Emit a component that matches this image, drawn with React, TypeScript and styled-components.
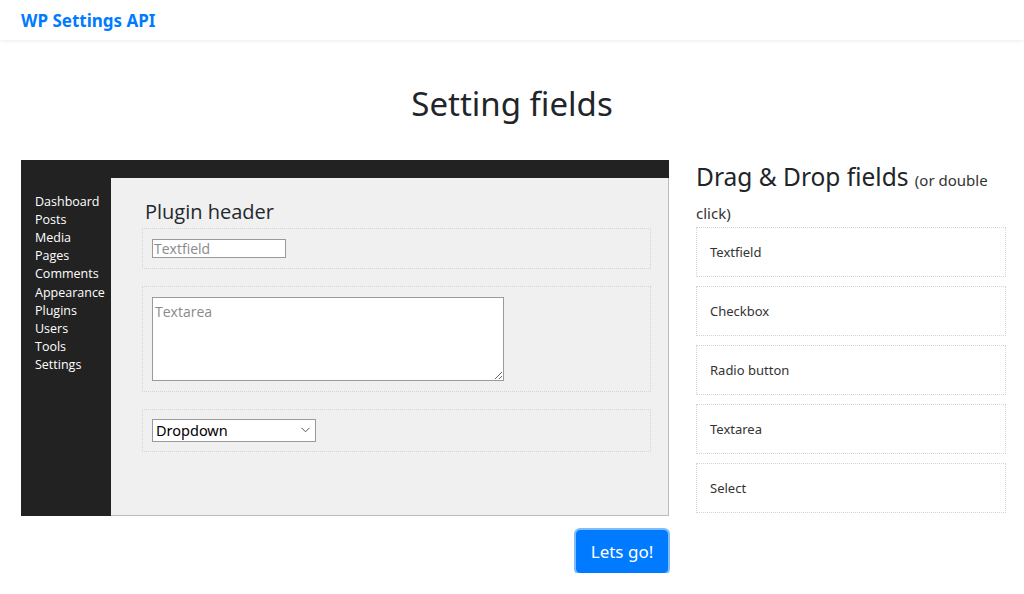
import React from "react";
import styled, { createGlobalStyle } from "styled-components";

const GlobalStyle = createGlobalStyle`
  * {
    box-sizing: border-box;
  }
  body {
    margin: 0;
    background: #fff;
    font-family: "Noto Sans", "Liberation Sans", sans-serif;
    color: #212529;
  }
`;

const Navbar = styled.nav`
  height: 40px;
  display: flex;
  align-items: center;
  padding: 0 21px;
  background: #fff;
  box-shadow: 0 1px 4px rgba(0, 0, 0, 0.08);
`;

const Brand = styled.a`
  font-size: 17px;
  font-weight: 700;
  color: #007bff;
  text-decoration: none;
`;

const Title = styled.h1`
  margin: 44px 0 36px;
  text-align: center;
  font-size: 33px;
  font-weight: 400;
  line-height: 39.6px;
  color: #212529;
`;

const Row = styled.div`
  display: flex;
  align-items: flex-start;
  gap: 27px;
  padding: 0 18px 0 21px;
`;

const LeftCol = styled.div`
  width: 648px;
  display: flex;
  flex-direction: column;
  align-items: flex-end;
`;

const AdminFrame = styled.div`
  width: 100%;
  height: 356px;
  display: grid;
  grid-template-columns: 90px 1fr;
  grid-template-rows: 18px 1fr;
  background: #222;
`;

const AdminBar = styled.div`
  grid-column: 1 / -1;
  background: #222;
`;

const AdminMenu = styled.ul`
  list-style: none;
  margin: 0;
  padding: 15px 0 0 14px;
  font-family: "Open Sans", "Noto Sans", sans-serif;
  font-size: 12.5px;
  line-height: 18.2px;
  color: #fff;
`;

const AdminContent = styled.div`
  background: #f0f0f0;
  padding: 21px 17px 0 31px;
  border-right: 1px solid #bdbdbd;
  border-bottom: 1px solid #bdbdbd;
  font-family: "Open Sans", "Noto Sans", sans-serif;
`;

const PluginHeader = styled.h2`
  margin: 0 0 3px 3px;
  font-size: 20px;
  font-weight: 400;
  line-height: 26px;
  color: #23282d;
`;

const FieldBox = styled.div<{ $pad?: number }>`
  border: 1px dotted #d4d4d4;
  padding: ${(p) => p.$pad ?? 10}px 9px;
  margin-bottom: 17px;
`;

const TextInput = styled.input`
  display: block;
  width: 134px;
  height: 19px;
  margin: 0;
  padding: 0 1px;
  border: 1px solid #9a9a9a;
  background: #fff;
  font-family: "Open Sans", "Noto Sans", sans-serif;
  font-size: 14px;
  &::placeholder {
    color: #8a8a8a;
  }
`;

const TextArea = styled.textarea`
  display: block;
  width: 352px;
  height: 84px;
  margin: 0;
  padding: 4px 2px;
  border: 1px solid #9a9a9a;
  background: #fff;
  font-family: "Open Sans", "Noto Sans", sans-serif;
  font-size: 14px;
  &::placeholder {
    color: #8a8a8a;
  }
`;

const SelectWrap = styled.div`
  position: relative;
  width: 164px;
  height: 23px;
`;

const Select = styled.select`
  appearance: none;
  display: block;
  width: 100%;
  height: 100%;
  margin: 0;
  padding: 0 20px 0 3px;
  border: 1px solid #9a9a9a;
  border-radius: 0;
  background: #fff;
  color: #000;
  font-family: "Noto Sans", "Liberation Sans", sans-serif;
  font-size: 14.5px;
`;

const Chevron = styled.svg`
  position: absolute;
  right: 6px;
  top: 8px;
  pointer-events: none;
`;

const GoButton = styled.button`
  margin: 14px 1px 0 0;
  width: 92px;
  height: 43px;
  border: 1px solid #007bff;
  border-radius: 4px;
  background: #007bff;
  color: #fff;
  font-family: "Noto Sans", "Liberation Sans", sans-serif;
  font-size: 17px;
  box-shadow: 0 0 0 2px #80bdff;
  cursor: pointer;
`;

const RightCol = styled.div`
  width: 310px;
`;

const DropHeading = styled.h3`
  margin: 0;
  font-size: 24.5px;
  font-weight: 400;
  line-height: 33.6px;
  color: #212529;
`;

const Small = styled.small`
  font-size: 15px;
  line-height: 1;
  color: #333;
`;

const DropItem = styled.div`
  height: 50px;
  display: flex;
  align-items: center;
  padding: 0 13px;
  margin-bottom: 9px;
  border: 1px dotted #d4d4d4;
  font-size: 13px;
  color: #333;
  cursor: move;
`;

const menuItems = [
  "Dashboard",
  "Posts",
  "Media",
  "Pages",
  "Comments",
  "Appearance",
  "Plugins",
  "Users",
  "Tools",
  "Settings",
];

const dropItems = ["Textfield", "Checkbox", "Radio button", "Textarea", "Select"];

export default function App() {
  return (
    <>
      <GlobalStyle />
      <Navbar>
        <Brand href="#">WP Settings API</Brand>
      </Navbar>
      <Title>Setting fields</Title>
      <Row>
        <LeftCol>
          <AdminFrame>
            <AdminBar />
            <AdminMenu>
              {menuItems.map((m) => (
                <li key={m}>{m}</li>
              ))}
            </AdminMenu>
            <AdminContent>
              <PluginHeader>Plugin header</PluginHeader>
              <FieldBox>
                <TextInput type="text" placeholder="Textfield" />
              </FieldBox>
              <FieldBox>
                <TextArea placeholder="Textarea" />
              </FieldBox>
              <FieldBox $pad={9}>
                <SelectWrap>
                  <Select defaultValue="dropdown">
                    <option value="dropdown">Dropdown</option>
                  </Select>
                  <Chevron width="9" height="6" viewBox="0 0 9 6">
                    <path d="M0.5 0.8 L4.5 4.8 L8.5 0.8" fill="none" stroke="#555" strokeWidth="1" />
                  </Chevron>
                </SelectWrap>
              </FieldBox>
            </AdminContent>
          </AdminFrame>
          <GoButton type="button">Lets go!</GoButton>
        </LeftCol>
        <RightCol>
          <DropHeading>
            <span>Drag &amp; Drop fields</span> <Small>(or double click)</Small>
          </DropHeading>
          {dropItems.map((d) => (
            <DropItem key={d}>{d}</DropItem>
          ))}
        </RightCol>
      </Row>
    </>
  );
}
